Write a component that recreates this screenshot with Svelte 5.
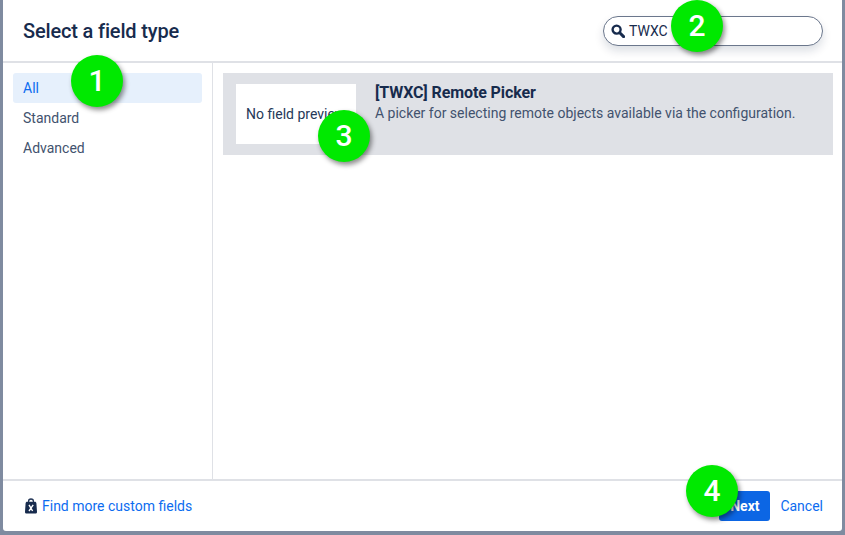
<script>
	const categories = ['All', 'Standard', 'Advanced'];
	const badges = [
		{ n: 1, cls: 'b1' },
		{ n: 2, cls: 'b2' },
		{ n: 3, cls: 'b3' },
		{ n: 4, cls: 'b4' }
	];
</script>

<div class="page">
	<div class="dialog">
		<header class="head">
			<h2>Select a field type</h2>
			<div class="search">
				<svg viewBox="0 0 14 14" width="14" height="14">
					<circle cx="5.6" cy="5.6" r="4" fill="none" stroke="#172b4d" stroke-width="2.4" />
					<path d="M9 9l3.6 3.600" stroke="#172b4d" stroke-width="3" stroke-linecap="round" />
				</svg>
				<span>TWXC</span>
			</div>
		</header>
		<div class="body">
			<nav class="side">
				{#each categories as c, i}
					<div class="cat" class:active={i === 0}>{c}</div>
				{/each}
			</nav>
			<main class="results">
				<div class="card">
					<div class="preview">No field preview</div>
					<div class="info">
						<div class="name">[TWXC] Remote Picker</div>
						<div class="desc">A picker for selecting remote objects available via the configuration.</div>
					</div>
				</div>
			</main>
		</div>
		<footer class="foot">
			<a class="more" href="#more">
				<svg viewBox="0 0 12 16" width="12" height="16">
					<path d="M3.600 5V3.200C3.600 1.900 4.600 1 6 1s2.400.9 2.400 2.200V5" fill="none" stroke="#253858" stroke-width="1.300" />
					<path d="M2.200 3.800h7.600c1 0 1.500.6 1.600 1.500l.6 8.500c.1 1-.6 1.700-1.500 1.700H1.500C.6 15.500-.1 14.800 0 13.800l.6-8.500c.1-.9.600-1.500 1.600-1.500z" fill="#172b4d" />
					<path d="M4 6.800l3.600 6.200M8.200 6.800L4 13" stroke="#fff" stroke-width="1.400" />
				</svg>
				Find more custom fields
			</a>
			<div class="actions">
				<button class="next">Next</button>
				<button class="cancel">Cancel</button>
			</div>
		</footer>
	</div>
	{#each badges as b}
		<div class="badge {b.cls}">{b.n}</div>
	{/each}
</div>

<style>
	:global(body) {
		margin: 0;
	}
	.page {
		position: relative;
		width: 845px;
		height: 535px;
		overflow: hidden;
		background: #7f8ba0;
		font-family: Roboto, "Liberation Sans", sans-serif;
		color: #172b4d;
		padding: 0 3px 4px;
		box-sizing: border-box;
	}
	.dialog {
		height: 100%;
		background: #fff;
		border-radius: 0 0 3px 3px;
		display: flex;
		flex-direction: column;
	}
	.head {
		height: 61px;
		flex: none;
		display: flex;
		align-items: center;
		justify-content: space-between;
		padding: 0 19px 0 20px;
		border-bottom: 2px solid #dfe1e6;
	}
	h2 {
		margin: 0;
		font-size: 20px;
		font-weight: 500;
		letter-spacing: -0.16px;
		color: #172b4d;
	}
	.search {
		width: 220px;
		height: 30px;
		box-sizing: border-box;
		border: 1px solid #6b778c;
		border-radius: 15px;
		display: flex;
		align-items: center;
		gap: 4px;
		padding-left: 7px;
		font-size: 14px;
		box-shadow: 0 5px 10px rgba(9, 30, 66, 0.14);
		background: #fff;
	}
	.body {
		flex: 1;
		display: flex;
		min-height: 0;
	}
	.side {
		width: 210px;
		flex: none;
		box-sizing: border-box;
		border-right: 1px solid #dfe1e6;
		padding: 10px 10px 0;
	}
	.cat {
		height: 30px;
		line-height: 30px;
		padding: 0 10px;
		font-size: 14px;
		color: #42526e;
		border-radius: 3px;
	}
	.cat.active {
		background: #e6f0fc;
		color: #0c6cf0;
	}
	.results {
		flex: 1;
		padding: 10px 9px 0 10px;
	}
	.card {
		height: 82px;
		background: #dfe1e6;
		display: flex;
		box-sizing: border-box;
		padding: 11px 13px;
		gap: 19px;
	}
	.preview {
		width: 120px;
		height: 60px;
		flex: none;
		background: #fff;
		font-size: 14px;
		line-height: 60px;
		padding-left: 10px;
		box-sizing: border-box;
		white-space: nowrap;
		overflow: hidden;
		color: #253858;
	}
	.info {
		margin-top: -1px;
	}
	.name {
		font-size: 16px;
		font-weight: 700;
		letter-spacing: -0.1px;
		line-height: 20px;
		color: #172b4d;
	}
	.desc {
		font-size: 14px;
		line-height: 20px;
		color: #42526e;
	}
	.foot {
		height: 50px;
		flex: none;
		border-top: 2px solid #dfe1e6;
		display: flex;
		align-items: center;
		justify-content: space-between;
		padding: 0 19px 0 22px;
		font-size: 14px;
	}
	.more {
		display: flex;
		align-items: center;
		gap: 5px;
		color: #0c6cf0;
		text-decoration: none;
	}
	.actions {
		display: flex;
		align-items: center;
	}
	button {
		font: inherit;
		border: none;
		border-radius: 3px;
		height: 30px;
		background: none;
		cursor: pointer;
	}
	.next {
		width: 51px;
		background: #0c66e4;
		color: #fff;
		font-weight: 700;
	}
	.cancel {
		color: #0c6cf0;
		padding: 0 0 0 10px;
	}
	.badge {
		position: absolute;
		width: 52px;
		height: 52px;
		border-radius: 50%;
		background: #00e900;
		color: #fff;
		font-size: 30px;
		font-weight: 500;
		line-height: 52px;
		text-align: center;
		box-shadow: 2px 3px 5px rgba(0, 0, 0, 0.45);
	}
	.b1 { left: 71px; top: 55px; }
	.b2 { left: 671px; top: 0; }
	.b3 { left: 318px; top: 110px; }
	.b4 { left: 686px; top: 465px; }
</style>
